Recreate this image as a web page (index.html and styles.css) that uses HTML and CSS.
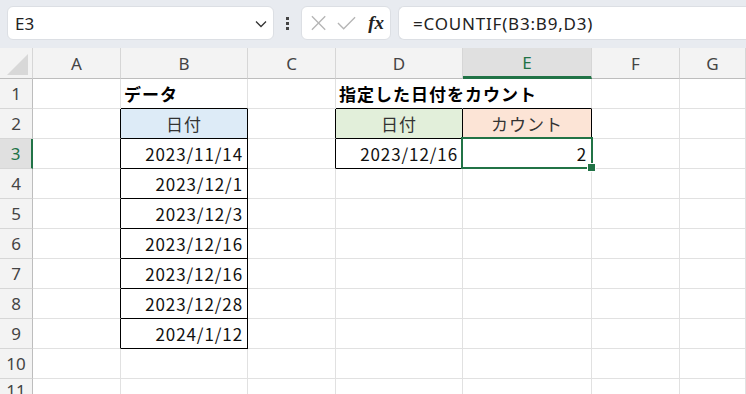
FILE: index.html
```html
<!DOCTYPE html>
<html lang="ja">
<head>
  <meta charset="UTF-8" />
  <title>COUNTIF</title>
  <link rel="stylesheet" href="styles.css">
</head>
<body>

<!-- FORMULA BAR -->
<div class="toolbar">
  <div class="name-box">
    <span>E3</span>
    <svg class="chev" width="12" height="8" viewBox="0 0 12 8"><path d="M1 1.5 6 6.5 11 1.5" fill="none" stroke="#333" stroke-width="1.3"/></svg>
  </div>
  <div class="dots"><i></i><i></i><i></i></div>
  <div class="fx-box">
    <svg width="18" height="18" viewBox="0 0 18 18"><path d="M2 2 16 16M16 2 2 16" stroke="#b5b5b5" stroke-width="1.4"/></svg>
    <svg width="20" height="16" viewBox="0 0 20 16"><path d="M1 8 7 14 19 2" fill="none" stroke="#b5b5b5" stroke-width="1.4"/></svg>
    <span class="fx">fx</span>
  </div>
  <div class="formula">=COUNTIF(B3:B9,D3)</div>
</div>

<!-- GRID -->
<div class="sheet">
  <div class="hd corner"><span class="tri"></span></div>
  <div class="hd">A</div><div class="hd">B</div><div class="hd">C</div><div class="hd">D</div>
  <div class="hd cur">E</div><div class="hd">F</div><div class="hd">G</div>

  <div class="rh">1</div>
  <div class="c"></div><div class="c bb title">データ</div><div class="c"></div>
  <div class="c bb title wide">指定した日付をカウント</div><div class="c bb"></div><div class="c"></div><div class="c"></div>

  <div class="rh">2</div>
  <div class="c br"></div><div class="c br bb ctr blue">日付</div><div class="c br"></div>
  <div class="c br bb ctr green">日付</div><div class="c br bb ctr orange">カウント</div><div class="c"></div><div class="c"></div>

  <div class="rh cur">3</div>
  <div class="c br"></div><div class="c br bb num">2023/11/14</div><div class="c br"></div>
  <div class="c br bb num">2023/12/16</div><div class="c br bb num sel">2</div><div class="c"></div><div class="c"></div>

  <div class="rh">4</div>
  <div class="c br"></div><div class="c br bb num">2023/12/1</div><div class="c"></div>
  <div class="c"></div><div class="c"></div><div class="c"></div><div class="c"></div>

  <div class="rh">5</div>
  <div class="c br"></div><div class="c br bb num">2023/12/3</div><div class="c"></div>
  <div class="c"></div><div class="c"></div><div class="c"></div><div class="c"></div>

  <div class="rh">6</div>
  <div class="c br"></div><div class="c br bb num">2023/12/16</div><div class="c"></div>
  <div class="c"></div><div class="c"></div><div class="c"></div><div class="c"></div>

  <div class="rh">7</div>
  <div class="c br"></div><div class="c br bb num">2023/12/16</div><div class="c"></div>
  <div class="c"></div><div class="c"></div><div class="c"></div><div class="c"></div>

  <div class="rh">8</div>
  <div class="c br"></div><div class="c br bb num">2023/12/28</div><div class="c"></div>
  <div class="c"></div><div class="c"></div><div class="c"></div><div class="c"></div>

  <div class="rh">9</div>
  <div class="c br"></div><div class="c br bb num">2024/1/12</div><div class="c"></div>
  <div class="c"></div><div class="c"></div><div class="c"></div><div class="c"></div>

  <div class="rh">10</div>
  <div class="c"></div><div class="c"></div><div class="c"></div>
  <div class="c"></div><div class="c"></div><div class="c"></div><div class="c"></div>

  <div class="rh">11</div>
  <div class="c"></div><div class="c"></div><div class="c"></div>
  <div class="c"></div><div class="c"></div><div class="c"></div><div class="c"></div>
</div>

</body>
</html>
```

FILE: styles.css
```css
*{box-sizing:border-box}

body {
  margin:0;
  width:746px;
  height:394px;
  overflow:hidden;
  background:#fff;
  font-family:"Noto Sans CJK JP",sans-serif;
  color:#000;
}

/* formula bar */
.toolbar {
  height:48px;
  background:#e8ebf0;
  display:flex;
  align-items:flex-start;
  padding:6px 0 0 7px;
}

.name-box {
  width:267px;
  height:34px;
  background:#fff;
  border:1px solid #dcdfe4;
  border-radius:6px;
  display:flex;
  align-items:center;
  justify-content:space-between;
  padding:0 6px 0 7px;
  font-family:"Noto Sans",sans-serif;
  font-size:17px;
  color:#222;
}

.chev {margin-top:2px}

.dots {
  width:27px;
  height:34px;
  display:flex;
  flex-direction:column;
  align-items:center;
  justify-content:center;
  gap:2px;
}
.dots i {display:block;width:3px;height:3px;background:#444}

.fx-box {
  width:90px;
  height:34px;
  background:#fff;
  border:1px solid #dcdfe4;
  border-radius:6px;
  display:flex;
  align-items:center;
  gap:10px;
  padding:0 6px 0 8px;
}

.fx {
  font-family:"Liberation Serif",serif;
  font-style:italic;
  font-weight:bold;
  font-size:19px;
  color:#222;
  margin-left:2px;
}

.formula {
  flex:1;
  height:34px;
  margin-left:7px;
  background:#fff;
  border:1px solid #dcdfe4;
  border-right:none;
  border-radius:6px 0 0 6px;
  display:flex;
  align-items:center;
  padding-left:14px;
  font-family:"Noto Sans",sans-serif;
  font-size:17px;
  letter-spacing:.8px;
  color:#222;
}

/* sheet */
.sheet {
  display:grid;
  grid-template-columns:33px 88px 127px 88px 127px 129px 88px 1fr;
  grid-template-rows:31px repeat(10,30px) 24px;
}

.hd, .rh {
  background:#f3f3f3;
  border-right:1px solid #d6d6d6;
  border-bottom:1px solid #d6d6d6;
  display:flex;
  align-items:center;
  justify-content:center;
  font-family:"Noto Sans",sans-serif;
  font-size:17px;
  color:#444;
}
.hd {border-bottom-color:#bdbdbd}
.rh {border-right-color:#bdbdbd}

.hd.cur {
  background:#e0e0e0;
  color:#217346;
  border-bottom:3px solid #217346;
}
.rh.cur {
  background:#e0e0e0;
  color:#217346;
  border-right:2px solid #217346;
}

.corner {position:relative}
.tri {
  position:absolute;
  right:4px;
  bottom:3px;
  width:0;height:0;
  border-left:21px solid transparent;
  border-bottom:21px solid #d8d8d8;
}

.c {
  border-right:1px solid #e1e1e1;
  border-bottom:1px solid #e1e1e1;
  display:flex;
  align-items:center;
  font-size:17px;
  white-space:nowrap;
  min-width:0;
}

.br {border-right-color:#000}
.bb {border-bottom-color:#000}

.title {font-weight:bold;padding-left:3px;letter-spacing:1px}
.wide {overflow:visible;border-right-color:transparent}
.ctr {justify-content:center;color:#333;letter-spacing:1px}
.num {justify-content:flex-end;padding-right:4px;letter-spacing:.9px;color:#111}

.blue {background:#ddebf7}
.green {background:#e2efda}
.orange {background:#fce4d6}

.sel {position:relative}
.sel::after {
  content:'';
  position:absolute;
  top:-2px;left:-2px;right:-2px;bottom:-1px;
  border:2px solid #217346;
}
.sel::before {
  content:'';
  position:absolute;
  right:-5px;bottom:-4px;
  width:7px;height:7px;
  background:#217346;
  border:1px solid #fff;
  z-index:1;
}
```
